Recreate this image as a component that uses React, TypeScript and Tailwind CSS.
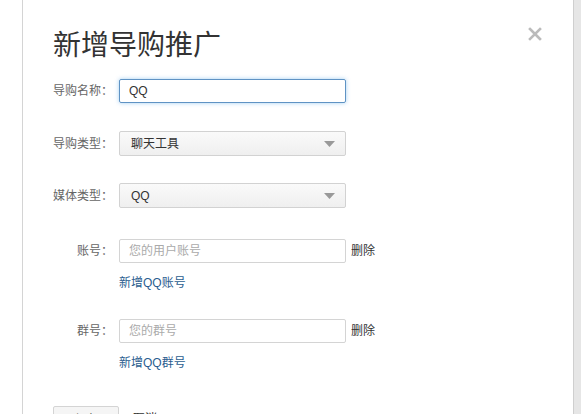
import { useState } from 'react'

const FONT = { fontFamily: '"Liberation Sans", "Noto Sans CJK SC", sans-serif' }

function Label({ text }: { text: string }) {
  return <span className="w-[60px] shrink-0 text-right text-[12px] text-[#666]">{text}</span>
}

function Select({ value }: { value: string }) {
  return (
    <div className="w-[227px] h-[25px] border border-[#d2d2d2] rounded-[2px] bg-gradient-to-b from-[#fafafa] to-[#efefef] flex items-center justify-between pl-[11px] pr-[10px]">
      <span className="text-[12px] text-[#333]">{value}</span>
      <svg width="11" height="6" viewBox="0 0 11 6">
        <polygon points="0,0 11,0 5.5,6" fill="#999" />
      </svg>
    </div>
  )
}

export default function App() {
  const [name, setName] = useState('QQ')
  const [account, setAccount] = useState('')
  const [group, setGroup] = useState('')

  return (
    <div className="flex h-[414px] w-[581px] overflow-hidden bg-white" style={FONT}>
      <div className="w-[23px] shrink-0 border-r border-[#d4d4d4]" />
      <div className="relative flex-1 pt-[32px] pl-[30px]">
        <button type="button" className="absolute left-[505px] top-[27px] text-[#bbb]">
          <svg width="14" height="14" viewBox="0 0 14 14">
            <path d="M2 2 L12 12 M12 2 L2 12" stroke="#bbb" strokeWidth="2.6" strokeLinecap="square" />
          </svg>
        </button>

        <h1 className="text-[28px] leading-[28px] text-[#333] font-normal">新增导购推广</h1>

        <div className="mt-[19px] flex items-center gap-[6px]">
          <Label text="导购名称：" />
          <input
            value={name}
            onChange={(e) => setName(e.target.value)}
            className="w-[227px] h-[24px] border border-[#5f93c4] rounded-[2px] px-[9px] text-[12px] text-[#333] outline-none shadow-[0_0_4px_rgba(102,175,233,0.6)]"
          />
        </div>

        <div className="mt-[28px] flex items-center gap-[6px]">
          <Label text="导购类型：" />
          <Select value="聊天工具" />
        </div>

        <div className="mt-[27px] flex items-center gap-[6px]">
          <Label text="媒体类型：" />
          <Select value="QQ" />
        </div>

        <div className="mt-[31px] flex items-center gap-[6px]">
          <Label text="账号：" />
          <input
            value={account}
            onChange={(e) => setAccount(e.target.value)}
            placeholder="您的用户账号"
            className="w-[227px] h-[24px] border border-[#d4d4d4] rounded-[2px] px-[9px] text-[12px] text-[#333] placeholder:text-[#aaa] outline-none"
          />
          <span className="ml-[-1px] text-[12px] text-[#333]">删除</span>
        </div>
        <div className="mt-[13px] pl-[66px] text-[12px] leading-[14px] text-[#2a5d8f]">新增QQ账号</div>

        <div className="mt-[29px] flex items-center gap-[6px]">
          <Label text="群号：" />
          <input
            value={group}
            onChange={(e) => setGroup(e.target.value)}
            placeholder="您的群号"
            className="w-[227px] h-[24px] border border-[#d4d4d4] rounded-[2px] px-[9px] text-[12px] text-[#333] placeholder:text-[#aaa] outline-none"
          />
          <span className="ml-[-1px] text-[12px] text-[#333]">删除</span>
        </div>
        <div className="mt-[13px] pl-[66px] text-[12px] leading-[14px] text-[#2a5d8f]">新增QQ群号</div>

        <div className="mt-[36px] flex items-start gap-[14px]">
          <button type="button" className="w-[66px] h-[28px] border border-[#d4d4d4] rounded-[2px] bg-[#f5f5f5] text-[12px] text-[#333]">
            保存
          </button>
          <span className="pt-[4px] text-[12px] text-[#333]">取消</span>
        </div>
      </div>
      <div className="w-[8px] shrink-0 border-l border-[#cfcfcf] bg-[#e6e6e6]" />
    </div>
  )
}
